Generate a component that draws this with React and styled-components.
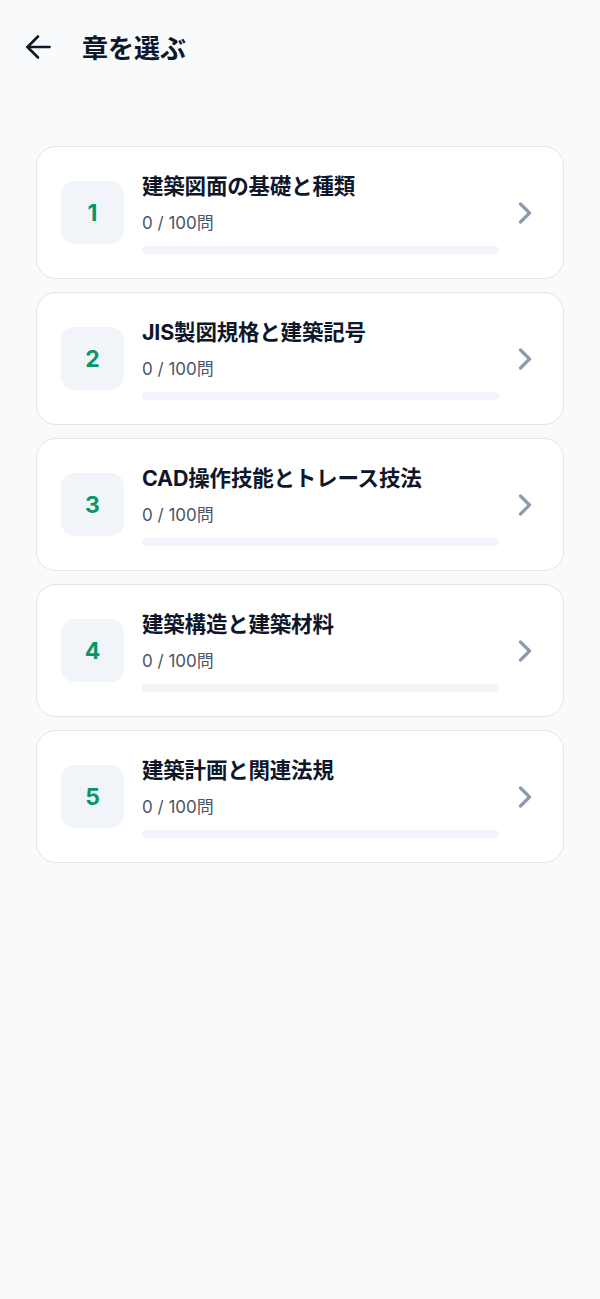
import React from 'react';
import styled, { createGlobalStyle } from 'styled-components';

const GlobalStyle = createGlobalStyle`
    html, body {
        margin: 0;
        padding: 0;
        background: #f9fafb;
    }
    body {
        font-family: "Inter", "Noto Sans CJK JP", sans-serif;
        color: #0f172a;
    }
`;

const Page = styled.div`
    min-height: 1299px;
    background: #f9fafb;
`;

const Header = styled.header`
    display: flex;
    align-items: center;
    height: 50px;
    padding: 22px 24px 0;
`;

const BackButton = styled.button`
    display: flex;
    align-items: center;
    justify-content: center;
    width: 28px;
    height: 28px;
    padding: 0;
    border: none;
    background: none;
    color: #0f172a;
    cursor: pointer;
`;

const Title = styled.h1`
    margin: 0 0 0 30px;
    font-family: "Noto Sans CJK JP", sans-serif;
    font-size: 26px;
    font-weight: 700;
    line-height: 34px;
    color: #0f172a;
`;

const List = styled.div`
    display: flex;
    flex-direction: column;
    gap: 13px;
    margin: 74px 36px 0;
`;

const Card = styled.div`
    display: flex;
    align-items: center;
    box-sizing: border-box;
    height: 133px;
    padding: 0 31px 0 24px;
    background: #ffffff;
    border: 1px solid #e3e5e8;
    border-radius: 20px;
    cursor: pointer;
`;

const NumberBox = styled.div`
    display: flex;
    align-items: center;
    justify-content: center;
    flex: none;
    width: 63px;
    height: 63px;
    border-radius: 14px;
    background: #f1f5f9;
    color: #059669;
    font-family: "Inter", sans-serif;
    font-size: 23px;
    font-weight: 700;
`;

const Content = styled.div`
    flex: 1;
    margin: 0 19px 0 18px;
    display: flex;
    flex-direction: column;
`;

const ChapterTitle = styled.div`
    font-family: "Inter", "Noto Sans CJK JP", sans-serif;
    font-size: 21.5px;
    font-weight: 700;
    line-height: 28px;
    color: #0f172a;
    letter-spacing: -0.2px;
`;

const Count = styled.div`
    margin-top: 12px;
    font-family: "Inter", "Noto Sans CJK JP", sans-serif;
    font-size: 17px;
    line-height: 22px;
    color: #4b5563;
`;

const Track = styled.div`
    margin-top: 12px;
    height: 8px;
    border-radius: 4px;
    background: #f1f4f8;
    overflow: hidden;
`;

const Fill = styled.div`
    height: 100%;
    background: #059669;
    border-radius: 4px;
`;

const Chevron = styled.svg`
    flex: none;
    color: #8e9ab0;
`;

const chapters = [
    { no: 1, title: '建築図面の基礎と種類', done: 0, total: 100 },
    { no: 2, title: 'JIS製図規格と建築記号', done: 0, total: 100 },
    { no: 3, title: 'CAD操作技能とトレース技法', done: 0, total: 100 },
    { no: 4, title: '建築構造と建築材料', done: 0, total: 100 },
    { no: 5, title: '建築計画と関連法規', done: 0, total: 100 },
];

const App = () => {
    return (
        <Page>
            <GlobalStyle />
            <Header>
                <BackButton aria-label="戻る">
                    <svg width="28" height="26" viewBox="0 0 28 26" fill="none" stroke="currentColor" strokeWidth="2.6" strokeLinecap="round" strokeLinejoin="round">
                        <path d="M25.5 13H3.5" />
                        <path d="M14 2.5 3.5 13 14 23.5" />
                    </svg>
                </BackButton>
                <Title>章を選ぶ</Title>
            </Header>

            <List>
                {chapters.map((c) => (
                    <Card key={c.no}>
                        <NumberBox>{c.no}</NumberBox>
                        <Content>
                            <ChapterTitle>{c.title}</ChapterTitle>
                            <Count>{c.done} / {c.total}問</Count>
                            <Track>
                                <Fill style={{ width: `${(c.done / c.total) * 100}%` }} />
                            </Track>
                        </Content>
                        <Chevron width="14" height="22" viewBox="0 0 14 22" fill="none" stroke="currentColor" strokeWidth="3.2" strokeLinecap="round" strokeLinejoin="round">
                            <path d="M2.5 2 11.5 11 2.5 20" />
                        </Chevron>
                    </Card>
                ))}
            </List>
        </Page>
    );
};

export default App;
